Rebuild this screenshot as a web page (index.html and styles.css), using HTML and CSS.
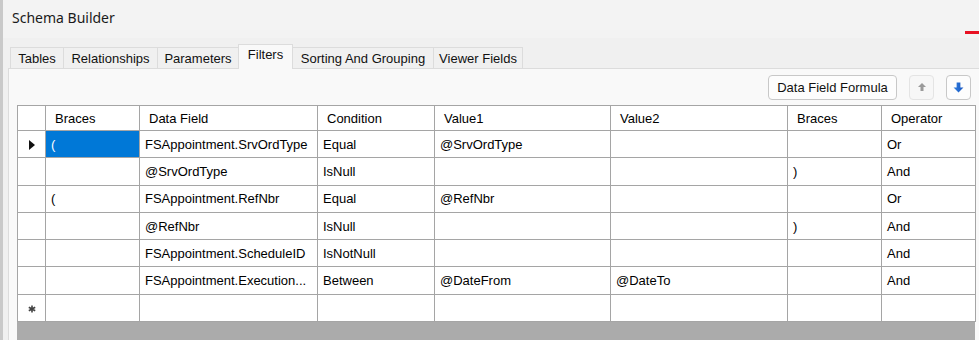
FILE: index.html
```html
<!DOCTYPE html>
<html lang="en">
<head>
<meta charset="UTF-8">
<title>Schema Builder</title>
<link rel="stylesheet" href="styles.css">
</head>
<body>
<div class="window">
    <div class="titlebar">Schema Builder<span class="close-edge"></span></div>

    <div class="tabs">
        <div class="tab t-tables">Tables</div>
        <div class="tab t-rel">Relationships</div>
        <div class="tab t-params">Parameters</div>
        <div class="tab t-filters active">Filters</div>
        <div class="tab t-sort">Sorting And Grouping</div>
        <div class="tab t-viewer">Viewer Fields</div>
    </div>

    <div class="panel">
        <div class="toolbar">
            <button class="btn">Data Field Formula</button>
            <button class="btn icon disabled" title="Move up">
                <svg width="10" height="10" viewBox="0 0 10 10">
                    <path d="M5 1 L9 5 H6.5 V9 H3.5 V5 H1 Z" fill="#9a9a9a"/>
                </svg>
            </button>
            <button class="btn icon" title="Move down">
                <svg width="11" height="11" viewBox="0 0 10 10">
                    <defs>
                        <linearGradient id="blue" x1="0" y1="0" x2="1" y2="0">
                            <stop offset="0" stop-color="#2f7fe0"/>
                            <stop offset="1" stop-color="#1a56c0"/>
                        </linearGradient>
                    </defs>
                    <path d="M5 9.5 L9.5 5 H6.7 V0.5 H3.3 V5 H0.5 Z" fill="url(#blue)"/>
                </svg>
            </button>
        </div>

        <div class="grid">
            <table>
                <colgroup>
                    <col style="width:28px">
                    <col style="width:94px">
                    <col style="width:178px">
                    <col style="width:117px">
                    <col style="width:176px">
                    <col style="width:177px">
                    <col style="width:94px">
                    <col style="width:94px">
                </colgroup>
                <thead>
                    <tr>
                        <th class="rowhead"></th>
                        <th>Braces</th>
                        <th>Data Field</th>
                        <th>Condition</th>
                        <th>Value1</th>
                        <th>Value2</th>
                        <th>Braces</th>
                        <th>Operator</th>
                    </tr>
                </thead>
                <tbody>
                    <tr>
                        <td class="rowhead"><span class="pointer"></span></td>
                        <td class="selected">(</td>
                        <td>FSAppointment.SrvOrdType</td>
                        <td>Equal</td>
                        <td>@SrvOrdType</td>
                        <td></td>
                        <td></td>
                        <td>Or</td>
                    </tr>
                    <tr>
                        <td class="rowhead"></td>
                        <td></td>
                        <td>@SrvOrdType</td>
                        <td>IsNull</td>
                        <td></td>
                        <td></td>
                        <td>)</td>
                        <td>And</td>
                    </tr>
                    <tr>
                        <td class="rowhead"></td>
                        <td>(</td>
                        <td>FSAppointment.RefNbr</td>
                        <td>Equal</td>
                        <td>@RefNbr</td>
                        <td></td>
                        <td></td>
                        <td>Or</td>
                    </tr>
                    <tr>
                        <td class="rowhead"></td>
                        <td></td>
                        <td>@RefNbr</td>
                        <td>IsNull</td>
                        <td></td>
                        <td></td>
                        <td>)</td>
                        <td>And</td>
                    </tr>
                    <tr>
                        <td class="rowhead"></td>
                        <td></td>
                        <td>FSAppointment.ScheduleID</td>
                        <td>IsNotNull</td>
                        <td></td>
                        <td></td>
                        <td></td>
                        <td>And</td>
                    </tr>
                    <tr>
                        <td class="rowhead"></td>
                        <td></td>
                        <td>FSAppointment.Execution...</td>
                        <td>Between</td>
                        <td>@DateFrom</td>
                        <td>@DateTo</td>
                        <td></td>
                        <td>And</td>
                    </tr>
                    <tr class="newrow">
                        <td class="rowhead">
                            <svg class="star" width="8" height="8" viewBox="0 0 8 8">
                                <path d="M4 0.5 V7.5 M0.8 2.2 L7.2 5.8 M0.8 5.8 L7.2 2.2" stroke="#444" stroke-width="1.6"/>
                            </svg>
                        </td>
                        <td></td>
                        <td></td>
                        <td></td>
                        <td></td>
                        <td></td>
                        <td></td>
                        <td></td>
                    </tr>
                </tbody>
            </table>
        </div>
    </div>
</div>
</body>
</html>
```

FILE: styles.css
```css
body {
    margin: 0;
    padding: 0;
    background-color: #f0f0f0;
    font-family: "Liberation Sans", Arial, sans-serif;
    font-size: 13px;
    color: #000;
    overflow: hidden;
}

.window {
    width: 979px;
    height: 340px;
    box-sizing: border-box;
    border-left: 3px solid #c9c9c9;
    background-color: #f0f0f0;
    overflow: hidden;
}

.titlebar {
    position: relative;
    height: 38px;
    line-height: 36px;
    padding-left: 9px;
    font-family: "Noto Sans", "Open Sans", sans-serif;
    font-size: 14px;
    color: #1a1a1a;
    background-color: #f3f3f3;
}

.close-edge {
    position: absolute;
    right: 0;
    bottom: 4px;
    width: 14px;
    height: 3px;
    background-color: #e81123;
}

.tabs {
    display: flex;
    align-items: flex-end;
    height: 30px;
    padding-left: 7px;
}

.tab {
    box-sizing: border-box;
    height: 21px;
    line-height: 21px;
    text-align: center;
    border: 1px solid #dcdcdc;
    border-bottom: none;
    margin-right: -1px;
    background-color: #f0f0f0;
    color: #111;
}

.t-tables { width: 54px; }
.t-rel { width: 95px; }
.t-params { width: 82px; }
.t-filters { width: 55px; }
.t-sort { width: 142px; }
.t-viewer { width: 90px; }

.tab.active {
    height: 25px;
    line-height: 20px;
    margin-bottom: -1px;
    background-color: #f9f9f9;
    position: relative;
    z-index: 1;
}

.panel {
    margin-left: 5px;
    height: 300px;
    border: 1px solid #dcdcdc;
    border-right: none;
    background-color: #f9f9f9;
    padding-left: 8px;
}

.toolbar {
    display: flex;
    justify-content: flex-end;
    align-items: center;
    width: 954px;
    height: 36px;
}

.btn {
    height: 25px;
    margin-left: 12px;
    padding: 0 8px;
    border: 1px solid #c8c8c8;
    border-radius: 4px;
    background-color: #fdfdfd;
    font-family: "Liberation Sans", Arial, sans-serif;
    font-size: 13px;
    color: #111;
    cursor: pointer;
}

.btn:first-child {
    width: 129px;
}

.btn.icon {
    width: 25px;
    padding: 0;
    display: flex;
    align-items: center;
    justify-content: center;
}

.btn.disabled {
    border-color: #e4e4e4;
    background-color: #f7f7f7;
}

.grid {
    width: 958px;
    height: 240px;
    background-color: #ababab;
}

table {
    width: 958px;
    table-layout: fixed;
    border-collapse: collapse;
    background-color: #fff;
}

th,
td {
    border: 1px solid #a5a5a5;
    height: 26.3px;
    padding: 0 0 0 5px;
    text-align: left;
    font-weight: normal;
    white-space: nowrap;
    overflow: hidden;
}

th {
    height: 24px;
    padding-left: 9px;
}

th.rowhead,
td.rowhead {
    padding: 0;
    text-align: center;
}

td.selected {
    background-color: #0078d7;
    color: #fff;
}

.pointer {
    display: inline-block;
    width: 0;
    height: 0;
    border-top: 5px solid transparent;
    border-bottom: 5px solid transparent;
    border-left: 6px solid #111;
    vertical-align: middle;
}

.star {
    vertical-align: middle;
}
```
